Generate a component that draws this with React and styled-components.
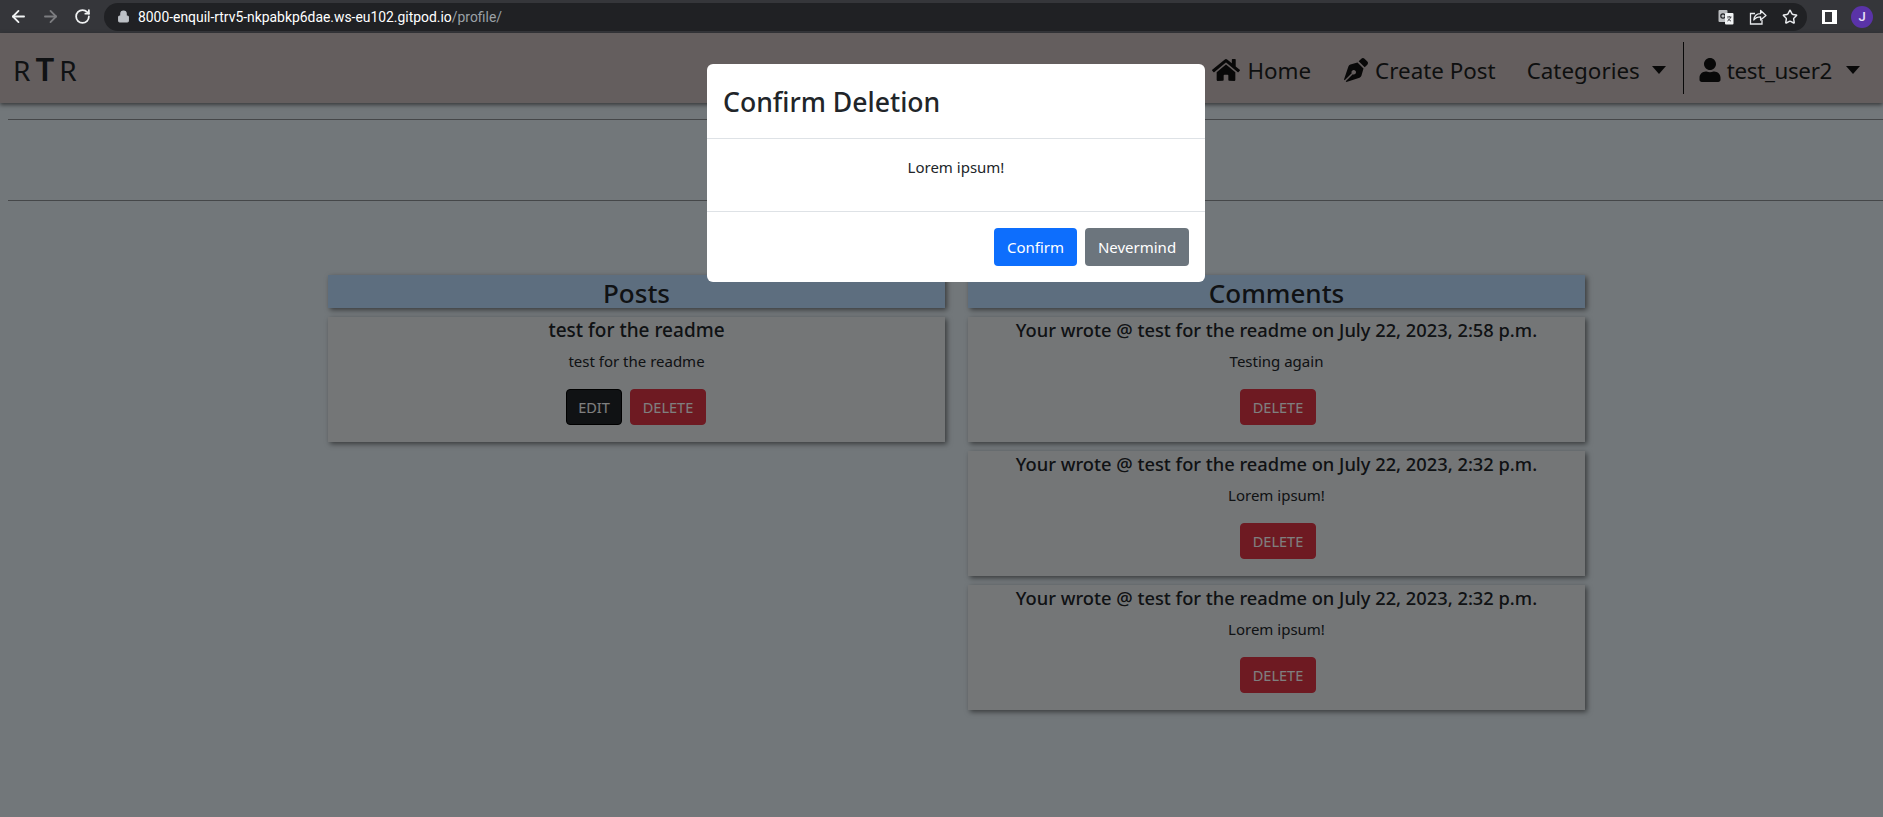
import React from "react";
import styled, { createGlobalStyle } from "styled-components";
import { FaHome, FaPenNib, FaUser } from "react-icons/fa";
import { ArrowLeft, ArrowRight, RotateCw, Lock, Star } from "lucide-react";

const GlobalStyle = createGlobalStyle`
    html, body {
        margin: 0;
        padding: 0;
        height: 817px;
        overflow: hidden;
        background: #e4eef4;
        font-family: "Noto Sans", "Open Sans", sans-serif;
        color: #212529;
    }
    * {
        box-sizing: border-box;
    }
`;

const ChromeBar = styled.div`
    height: 33px;
    background: #35363a;
    display: flex;
    align-items: center;
    padding-left: 2px;
`;
const ChromeButton = styled.div`
    width: 32px;
    height: 24px;
    display: flex;
    align-items: center;
    justify-content: center;
    color: ${(p) => (p.$off ? "#7c7d80" : "#f1f3f4")};
`;
const UrlBar = styled.div`
    margin-left: 6px;
    width: 1703px;
    height: 28px;
    border-radius: 14px;
    background: #202124;
    display: flex;
    align-items: center;
    padding: 0 9px 0 13px;
    font: 13.9px "Roboto", sans-serif;
`;
const Address = styled.span`
    margin-left: 8px;
    flex: 1;
    color: #fff;
    span {
        color: #9aa0a6;
    }
`;
const UrlIcons = styled.div`
    display: flex;
    gap: 15px;
    color: #e8eaed;
    align-items: center;
`;
const SidePanelIcon = styled.div`
    margin-left: 15px;
    width: 15px;
    height: 14px;
    background: #fff;
    padding: 2px 0 2px 3px;
    &::after {
        content: "";
        display: block;
        height: 100%;
        width: 7px;
        background: #35363a;
    }
`;
const Avatar = styled.div`
    margin-left: 14px;
    width: 22px;
    height: 22px;
    border-radius: 50%;
    background: #5a33a8;
    color: #e8e0f8;
    font: 500 13px "Roboto", sans-serif;
    display: flex;
    align-items: center;
    justify-content: center;
`;

const Navbar = styled.nav`
    height: 70px;
    background: #c8bcbc;
    box-shadow: 0 2px 4px rgba(0, 0, 0, 0.5);
    display: flex;
    align-items: center;
    justify-content: space-between;
    padding: 0 23px 0 13px;
`;
const Logo = styled.div`
    font-size: 28px;
    line-height: 34px;
    padding-top: 3px;
    display: flex;
    align-items: baseline;
    gap: 5px;
    font-weight: 400;
    b {
        font-size: 33px;
        line-height: 1;
        font-weight: 600;
    }
`;
const NavLinks = styled.div`
    display: flex;
    align-items: center;
    height: 52px;
`;
const NavLink = styled.a`
    display: flex;
    align-items: center;
    gap: ${(p) => p.$iconGap || 7}px;
    padding-top: 4px;
    font-size: 22.4px;
    letter-spacing: ${(p) => p.$spacing || 0}px;
    margin-left: ${(p) => p.$gap ?? 33}px;
    color: #1c1e20;
    svg {
        color: #111;
    }
`;
const Caret = styled.span`
    width: 0;
    height: 0;
    margin-left: ${(p) => p.$gap}px;
    border-left: 7px solid transparent;
    border-right: 7px solid transparent;
    border-top: 8px solid #111;
`;
const NavDivider = styled.div`
    width: 1px;
    height: 52px;
    background: #111;
    margin-left: 17px;
`;

const Rule = styled.hr`
    margin: ${(p) => p.$top}px 0 0 8px;
    border: 0;
    border-top: 1px solid #8b8f92;
`;

const Columns = styled.main`
    display: grid;
    grid-template-columns: 617px 617px;
    gap: 23px;
    margin: 74px 0 0 328px;
    width: 1257px;
`;
const Column = styled.section`
    display: flex;
    flex-direction: column;
    gap: 9px;
`;
const ColumnHeading = styled.h2`
    margin: 0;
    height: 33px;
    line-height: 37px;
    text-align: center;
    font-size: 26px;
    font-weight: 500;
    background: #bbdcff;
    box-shadow: 2px 2px 5px rgba(0, 0, 0, 0.5);
`;
const Card = styled.article`
    height: 125px;
    background: #e8ecef;
    box-shadow: 2px 2px 5px rgba(0, 0, 0, 0.5);
    text-align: center;
`;
const CardTitle = styled.h3`
    margin: 0;
    font-size: ${(p) => p.$size}px;
    line-height: 26px;
    font-weight: 500;
`;
const CardText = styled.p`
    margin: 7px 0 0;
    font-size: 15px;
    line-height: 22px;
`;
const CardActions = styled.div`
    margin-top: 17px;
    display: flex;
    justify-content: center;
    gap: 8px;
    padding: ${(p) => (p.$solo ? "0 0 0 3px" : "0 1px 0 0")};
`;
const ActionButton = styled.button`
    height: 36px;
    width: ${(p) => (p.$dark ? 56 : 76)}px;
    padding: 0;
    border: 1px solid ${(p) => (p.$dark ? "#000" : "#dc3545")};
    border-radius: 4px;
    background: ${(p) => (p.$dark ? "#212529" : "#dc3545")};
    color: #fff;
    font: 14.5px "Noto Sans", sans-serif;
    text-transform: uppercase;
`;

const Backdrop = styled.div`
    position: fixed;
    inset: 33px 0 0 0;
    background: rgba(0, 0, 0, 0.5);
`;
const Modal = styled.div`
    position: fixed;
    top: 64px;
    left: 707px;
    width: 498px;
    height: 218px;
    background: #fff;
    border-radius: 6px;
    display: flex;
    flex-direction: column;
`;
const ModalHeader = styled.div`
    height: 75px;
    padding: 1px 16px 0;
    display: flex;
    align-items: center;
    border-bottom: 1px solid #dee2e6;
`;
const ModalTitle = styled.h5`
    margin: 0;
    font-size: 26.6px;
    font-weight: 500;
`;
const ModalBody = styled.div`
    height: 73px;
    padding-top: 17px;
    text-align: center;
    font-size: 15px;
    line-height: 22px;
    border-bottom: 1px solid #dee2e6;
`;
const ModalFooter = styled.div`
    flex: 1;
    display: flex;
    justify-content: flex-end;
    align-items: center;
    gap: 8px;
    padding: 0 16px;
`;
const ModalButton = styled.button`
    height: 38px;
    width: ${(p) => p.$width}px;
    border: 0;
    border-radius: 4px;
    background: ${(p) => p.$bg};
    color: #fff;
    font: 15px "Noto Sans", sans-serif;
`;

// the translate and share icons of the browser bar
function TranslateIcon() {
    return (
        <svg width="16" height="16" viewBox="0 0 16 16">
            <rect x="0.5" y="1" width="9" height="12" rx="1" fill="#b9bbbe" />
            <circle cx="5" cy="7" r="2.2" fill="none" stroke="#202124" strokeWidth="1.2" />
            <rect x="7" y="4" width="8.5" height="11.5" rx="1" fill="#f1f3f4" />
            <path d="M9 8h4.5M11.2 7v1M12.6 8c-.5 2-1.6 3.2-3.2 4M10 9.5c.6 1.2 1.6 2 3 2.6" fill="none" stroke="#35363a" strokeWidth="0.9" />
        </svg>
    );
}

function ShareIcon() {
    return (
        <svg width="18" height="17" viewBox="0 0 18 17" fill="none" stroke="#e8eaed" strokeWidth="1.3">
            <path d="M6 5.5H1.5v10.5h11.5v-4" />
            <path d="M4.8 12c.4-3.8 3-6.3 6.8-6.3V2.5L17 7.4l-5.4 4.7V8.8c-3 0-5.2.8-6.8 3.2z" strokeLinejoin="round" />
        </svg>
    );
}

const posts = [{ title: "test for the readme", text: "test for the readme" }];
const comments = [
    { title: "Your wrote @ test for the readme on July 22, 2023, 2:58 p.m.", text: "Testing again" },
    { title: "Your wrote @ test for the readme on July 22, 2023, 2:32 p.m.", text: "Lorem ipsum!" },
    { title: "Your wrote @ test for the readme on July 22, 2023, 2:32 p.m.", text: "Lorem ipsum!" },
];

function App() {
    return (
        <>
            <GlobalStyle />
            <ChromeBar>
                <ChromeButton><ArrowLeft size={19} strokeWidth={2.3} /></ChromeButton>
                <ChromeButton $off><ArrowRight size={19} strokeWidth={2.3} /></ChromeButton>
                <ChromeButton><RotateCw size={17} strokeWidth={2.5} /></ChromeButton>
                <UrlBar>
                    <Lock size={13} fill="#bdc1c6" color="#bdc1c6" />
                    <Address>8000-enquil-rtrv5-nkpabkp6dae.ws-eu102.gitpod.io<span>/profile/</span></Address>
                    <UrlIcons>
                        <TranslateIcon />
                        <ShareIcon />
                        <Star size={16} strokeWidth={2.2} />
                    </UrlIcons>
                </UrlBar>
                <SidePanelIcon />
                <Avatar>J</Avatar>
            </ChromeBar>

            <Navbar>
                <Logo>R<b>T</b>R</Logo>
                <NavLinks>
                    <NavLink><FaHome size={28} />Home</NavLink>
                    <NavLink><FaPenNib size={24} />Create Post</NavLink>
                    <NavLink $gap={31}>Categories<Caret $gap={5} /></NavLink>
                    <NavDivider />
                    <NavLink $gap={14} $iconGap={5} $spacing={-0.35}><FaUser size={24} />test_user2<Caret $gap={9} /></NavLink>
                </NavLinks>
            </Navbar>

            <Rule $top={16} />
            <Rule $top={80} />

            <Columns>
                <Column>
                    <ColumnHeading>Posts</ColumnHeading>
                    {posts.map((post) => (
                        <Card key={post.title}>
                            <CardTitle $size={19}>{post.title}</CardTitle>
                            <CardText>{post.text}</CardText>
                            <CardActions>
                                <ActionButton $dark>Edit</ActionButton>
                                <ActionButton>Delete</ActionButton>
                            </CardActions>
                        </Card>
                    ))}
                </Column>
                <Column>
                    <ColumnHeading>Comments</ColumnHeading>
                    {comments.map((comment, i) => (
                        <Card key={i}>
                            <CardTitle $size={18.3}>{comment.title}</CardTitle>
                            <CardText>{comment.text}</CardText>
                            <CardActions $solo>
                                <ActionButton>Delete</ActionButton>
                            </CardActions>
                        </Card>
                    ))}
                </Column>
            </Columns>

            <Backdrop />
            <Modal>
                <ModalHeader><ModalTitle>Confirm Deletion</ModalTitle></ModalHeader>
                <ModalBody>Lorem ipsum!</ModalBody>
                <ModalFooter>
                    <ModalButton $bg="#0d6efd" $width={83}>Confirm</ModalButton>
                    <ModalButton $bg="#6c757d" $width={104}>Nevermind</ModalButton>
                </ModalFooter>
            </Modal>
        </>
    );
}

export default App;
